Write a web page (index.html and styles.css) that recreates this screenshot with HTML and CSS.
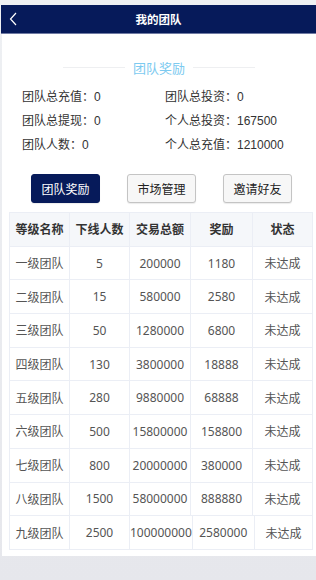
FILE: index.html
```html
<!DOCTYPE html>
<html lang="zh-CN">
<head>
<meta charset="utf-8">
<title>我的团队</title>
<link rel="stylesheet" href="styles.css">
</head>
<body>
<div class="app">
  <header class="topbar">
    <svg class="back" width="10" height="14" viewBox="0 0 10 14"><polyline points="7,1 1.5,7 7,13" fill="none" stroke="#ffffff" stroke-width="1.2"/></svg>
    <span class="topbar-title">我的团队</span>
  </header>
  <main class="card">
    <div class="section-title"><span class="line"></span><span class="title-text">团队奖励</span><span class="line"></span></div>
    <div class="stats">
      <div class="stat">团队总充值：0</div>
      <div class="stat">团队总投资：0</div>
      <div class="stat">团队总提现：0</div>
      <div class="stat">个人总投资：167500</div>
      <div class="stat">团队人数：0</div>
      <div class="stat">个人总充值：1210000</div>
    </div>
    <div class="tabs">
      <button class="btn btn-primary">团队奖励</button>
      <button class="btn">市场管理</button>
      <button class="btn">邀请好友</button>
    </div>
    <div class="table">
      <div class="row head"><div class="cell">等级名称</div><div class="cell">下线人数</div><div class="cell">交易总额</div><div class="cell">奖励</div><div class="cell">状态</div></div>
      <div class="row"><div class="cell">一级团队</div><div class="cell">5</div><div class="cell">200000</div><div class="cell">1180</div><div class="cell">未达成</div></div>
      <div class="row"><div class="cell">二级团队</div><div class="cell">15</div><div class="cell">580000</div><div class="cell">2580</div><div class="cell">未达成</div></div>
      <div class="row"><div class="cell">三级团队</div><div class="cell">50</div><div class="cell">1280000</div><div class="cell">6800</div><div class="cell">未达成</div></div>
      <div class="row"><div class="cell">四级团队</div><div class="cell">130</div><div class="cell">3800000</div><div class="cell">18888</div><div class="cell">未达成</div></div>
      <div class="row"><div class="cell">五级团队</div><div class="cell">280</div><div class="cell">9880000</div><div class="cell">68888</div><div class="cell">未达成</div></div>
      <div class="row"><div class="cell">六级团队</div><div class="cell">500</div><div class="cell">15800000</div><div class="cell">158800</div><div class="cell">未达成</div></div>
      <div class="row"><div class="cell">七级团队</div><div class="cell">800</div><div class="cell">20000000</div><div class="cell">380000</div><div class="cell">未达成</div></div>
      <div class="row"><div class="cell">八级团队</div><div class="cell">1500</div><div class="cell">58000000</div><div class="cell">888880</div><div class="cell">未达成</div></div>
      <div class="row"><div class="cell">九级团队</div><div class="cell">2500</div><div class="cell">100000000</div><div class="cell">2580000</div><div class="cell">未达成</div></div>
    </div>
  </main>
</div>
</body>
</html>
```

FILE: styles.css
```css
html, body {
  margin: 0;
  padding: 0;
  height: 100%;
}
body {
  background: linear-gradient(#eef0f3, #e6e7ec);
  font-family: "Liberation Sans", "Noto Sans CJK SC", sans-serif;
  color: #333;
}
.app {
  padding: 5px 0 0 1px;
}
.topbar {
  position: relative;
  height: 28px;
  background: #061a5a;
  border-bottom: 1px solid #6f7aa3;
  display: flex;
  align-items: center;
  justify-content: center;
}
.back {
  position: absolute;
  left: 8px;
  top: 7px;
}
.topbar-title {
  color: #fff;
  font-size: 11.5px;
  font-weight: bold;
}
.card {
  background: #fff;
  margin-left: 1px;
  padding: 23px 0 6px 0;
}
.section-title {
  display: flex;
  align-items: center;
  justify-content: center;
  gap: 8px;
  height: 20px;
}
.line {
  width: 62px;
  height: 1px;
  background: #eeeff1;
}
.title-text {
  color: #7ccaf0;
  font-size: 13px;
}
.stats {
  display: grid;
  grid-template-columns: 143px 1fr;
  padding: 8px 0 0 20px;
}
.stat {
  font-size: 12px;
  line-height: 24px;
  color: #333;
}
.tabs {
  display: flex;
  gap: 27px;
  padding-left: 29px;
  margin-top: 17px;
}
.btn {
  width: 69px;
  height: 29px;
  border: 1px solid #c4c4c4;
  border-radius: 3px;
  background: #f7f7f7;
  color: #222;
  font-family: inherit;
  font-size: 12px;
  padding: 0;
  box-shadow: 0 1px 1px rgba(0,0,0,0.08);
}
.btn-primary {
  background: #061a5a;
  border-color: #061a5a;
  color: #fff;
}
.table {
  margin: 9px 0 0 7px;
  width: 303px;
  border-top: 1px solid #ebeef5;
  border-left: 1px solid #ebeef5;
}
.row {
  display: grid;
  grid-template-columns: 60px 60px minmax(61px, max-content) 62px 1fr;
  height: 33.7px;
}
.cell {
  border-right: 1px solid #ebeef5;
  border-bottom: 1px solid #ebeef5;
  display: flex;
  align-items: center;
  justify-content: center;
  font-family: "Noto Sans", "Noto Sans CJK SC", sans-serif;
  font-size: 12px;
  color: #555;
  white-space: nowrap;
}
.head {
  background: #f5f7fa;
}
.head .cell {
  font-weight: bold;
  color: #333;
}
```
